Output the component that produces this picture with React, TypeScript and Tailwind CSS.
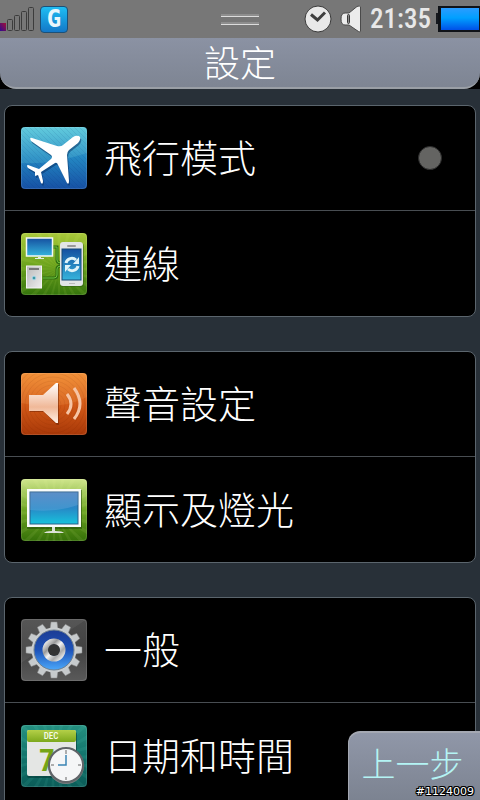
import type { ReactNode } from 'react'

function SignalIcon() {
  return (
    <svg width="36" height="26" viewBox="0 0 36 26" aria-hidden="true">
      <rect x="0" y="17" width="6" height="8" fill="url(#sig)" />
      <g fill="none" stroke="#3c3c3c" strokeWidth="1">
        <rect x="7.5" y="13.5" width="5" height="11" rx="1" />
        <rect x="14.5" y="9.5" width="5" height="15" rx="1" />
        <rect x="21.5" y="5.5" width="5" height="19" rx="1" />
        <rect x="28.5" y="1.5" width="5" height="23" rx="1" />
      </g>
      <defs>
        <linearGradient id="sig" x1="1" y1="0" x2="0" y2="1">
          <stop offset="0" stopColor="#a01038" />
          <stop offset="1" stopColor="#300a90" />
        </linearGradient>
      </defs>
    </svg>
  )
}

function ClockIcon() {
  return (
    <svg width="28" height="28" viewBox="0 0 28 28" aria-hidden="true">
      <circle cx="14" cy="14" r="13" fill="#e9e9e9" stroke="#3a3a3a" />
      <path d="M7 9.5 L13.5 15 L21 7.5" fill="none" stroke="#3f3f3f" strokeWidth="3" />
    </svg>
  )
}

function SpeakerIcon() {
  return (
    <svg width="22" height="28" viewBox="0 0 22 28" aria-hidden="true">
      <path
        d="M5 8 H9 L17 1.5 Q20.5 0 20.5 2 V26 Q20.5 28 17 25.5 L9 20 H5 Q1 20 1 14 Q1 8 5 8 Z"
        fill="#ececec"
        stroke="#4a4a4a"
      />
      <rect x="7.5" y="9.5" width="2" height="9" rx="1" fill="#8a8a8a" stroke="#3a3a3a" />
    </svg>
  )
}

function BatteryIcon() {
  return (
    <svg width="44" height="28" viewBox="0 0 44 28" aria-hidden="true">
      <rect x="0" y="8" width="4" height="11" fill="#15181d" />
      <rect x="2" y="1" width="42" height="26" fill="#101318" />
      <rect x="5" y="3" width="38" height="22" fill="url(#bat)" />
      <defs>
        <linearGradient id="bat" x1="0" y1="0" x2="0" y2="1">
          <stop offset="0" stopColor="#2c9cff" />
          <stop offset="0.45" stopColor="#00a0ff" />
          <stop offset="1" stopColor="#0050e8" />
        </linearGradient>
      </defs>
    </svg>
  )
}

type TileProps = { id: string; from: string; mid: string; to: string; children: ReactNode }

function Tile({ id, from, mid, to, children }: TileProps) {
  return (
    <svg width="66" height="62" viewBox="0 0 66 62" className="shrink-0" aria-hidden="true">
      <defs>
        <linearGradient id={id} x1="0" y1="0" x2="0" y2="1">
          <stop offset="0" stopColor={from} />
          <stop offset="0.5" stopColor={mid} />
          <stop offset="1" stopColor={to} />
        </linearGradient>
        <clipPath id={id + '-clip'}>
          <rect width="66" height="62" rx="4" />
        </clipPath>
      </defs>
      <rect width="66" height="62" rx="4" fill={`url(#${id})`} />
      <g clipPath={`url(#${id}-clip)`}>{children}</g>
      <rect x="0.5" y="0.5" width="65" height="61" rx="4" fill="none" stroke="#fff" strokeOpacity="0.12" />
    </svg>
  )
}

// Sunburst that fans out from a point inside the tile
function Rays({ x, y, color }: { x: number; y: number; color: string }) {
  return (
    <g fill={color} fillOpacity="0.08">
      {Array.from({ length: 24 }, (_, i) => (
        <path key={i} d="M0 0 L80 -4 L80 4 Z" transform={`translate(${x} ${y}) rotate(${i * 15})`} />
      ))}
    </g>
  )
}

// Body and wings of the plane, drawn once as shadow and once in white
const planePath =
  'M58 9 Q55 8 52 10 L42 18 Q40 20 36 19 L11 11 Q8 10 10 14 L30 28 Q32 30 30 32 L18 42 L7 38 Q5 38 7 41 L14 45 L14 49 L17 48 L20 56 Q22 58 22 54 L20 45 L34 36 Q36 35 37 38 L46 56 Q48 58 48 54 L46 28 Q46 25 48 23 L57 16 Q61 11 58 9 Z'

function FlightTile() {
  return (
    <Tile id="flight" from="#5cc8dc" mid="#2386c2" to="#1650a4">
      <g stroke="#0d3f80" strokeOpacity="0.14">
        {Array.from({ length: 26 }, (_, i) => (
          <path key={i} d={`M${i * 5 - 62} 0 L${i * 5} 62`} />
        ))}
      </g>
      <path d="M0 0 H66 V26 Q30 38 0 36 Z" fill="#7fe0e6" fillOpacity="0.18" />
      <path d={planePath} transform="translate(1 2)" fill="#062c60" fillOpacity="0.5" />
      <path d={planePath} fill="#fff" />
    </Tile>
  )
}

function LinkTile() {
  return (
    <Tile id="link" from="#a9c83a" mid="#6fa51e" to="#35740c">
      <Rays x={38} y={36} color="#e6ff80" />
      <g fill="none" stroke="#2f6d12" strokeWidth="3">
        <path d="M32 14 H36 V27 Q36 30 40 30 M22 45 H33 Q36 45 36 42 V36 Q36 33 40 33" />
      </g>
      <g fill="none" stroke="#6fc43c" strokeWidth="1">
        <path d="M32 14 H36 V27 Q36 30 40 30 M22 45 H33 Q36 45 36 42 V36 Q36 33 40 33" />
      </g>
      <defs>
        <linearGradient id="link-screen" x1="0" y1="0" x2="0" y2="1">
          <stop offset="0" stopColor="#1550a0" />
          <stop offset="1" stopColor="#35b4dc" />
        </linearGradient>
        <linearGradient id="link-case" x1="0" y1="0" x2="1" y2="1">
          <stop offset="0" stopColor="#b8b8b8" />
          <stop offset="1" stopColor="#eee" />
        </linearGradient>
      </defs>
      <rect x="5.5" y="5" width="26" height="18" fill="url(#link-screen)" stroke="#f4f8f4" strokeWidth="1.5" />
      <path d="M17 24 H20 V25 H23 V26 H14 V25 H17 Z" fill="#e4ece0" />
      <rect x="5.5" y="33" width="15" height="22" fill="url(#link-case)" stroke="#f3f3f3" />
      <rect x="8" y="35" width="10" height="2" fill="#777" />
      <circle cx="13" cy="45" r="2" fill="#3b98a4" stroke="#bde" />
      <rect x="39" y="10" width="24" height="44" rx="3" fill="#2d5b12" fillOpacity="0.5" />
      <rect x="39" y="9" width="23" height="44" rx="3" fill="#e2e5e5" />
      <rect x="46" y="12" width="9" height="2" rx="1" fill="#999" />
      <rect x="41" y="16" width="19" height="31" fill="url(#link-screen)" stroke="#174a78" />
      <rect x="48" y="50" width="6" height="1" fill="#bbb" />
      <g fill="none" stroke="#dff3f8" strokeWidth="3">
        <path d="M45 30 A6 6 0 0 1 55 27" />
        <path d="M57 33 A6 6 0 0 1 47 36" />
      </g>
      <path d="M58 24 V31 H52 Z M44 39 V32 H50 Z" fill="#dff3f8" />
    </Tile>
  )
}

function SoundTile() {
  return (
    <Tile id="sound" from="#f08a30" mid="#d35a18" to="#a83808">
      <g fill="none" stroke="#7c2a04" strokeOpacity="0.12">
        {[8, 12, 16, 20, 24, 28, 32, 36, 40].map(r => (
          <circle key={r} cx="32" cy="32" r={r} />
        ))}
      </g>
      <path d="M0 0 H66 V24 Q40 38 0 30 Z" fill="#ffc070" fillOpacity="0.14" />
      <defs>
        <linearGradient id="sound-cone" x1="0" y1="0" x2="0" y2="1">
          <stop offset="0" stopColor="#fff" />
          <stop offset="0.6" stopColor="#f0b898" />
          <stop offset="1" stopColor="#fff0e6" />
        </linearGradient>
      </defs>
      <path d="M9 24 H23 L36 11 H38 V52 H36 L23 39 H9 Z" fill="#6b2204" fillOpacity="0.5" />
      <path d="M8 22 H22 L35 10 H37 V50 H35 L22 38 H8 Z" fill="url(#sound-cone)" />
      <g fill="none" stroke="#f6c4a4" strokeWidth="3">
        <path d="M46 21 Q54 31 46 41" />
        <path d="M53 15 Q65 31 53 46" />
      </g>
    </Tile>
  )
}

function DisplayTile() {
  return (
    <Tile id="display" from="#cfe58c" mid="#6ea624" to="#357008">
      <Rays x={33} y={34} color="#efffa0" />
      <defs>
        <linearGradient id="display-screen" x1="0" y1="0" x2="0" y2="1">
          <stop offset="0" stopColor="#4a80be" />
          <stop offset="0.5" stopColor="#2788c6" />
          <stop offset="1" stopColor="#18c2dc" />
        </linearGradient>
      </defs>
      <rect x="6" y="11" width="55" height="39" fill="#1d4505" fillOpacity="0.5" />
      <rect x="6" y="10" width="54" height="38" fill="#fafcfa" />
      <rect x="9" y="13" width="48" height="32" fill="url(#display-screen)" stroke="#2b5e88" />
      <path d="M9 13 H57 V26 Q34 34 9 31 Z" fill="#a8c8f0" fillOpacity="0.2" />
      <path d="M31 48 H34 V52 Q42 52 43 54 H23 Q24 52 31 52 Z" fill="#dde3d8" />
    </Tile>
  )
}

function GeneralTile() {
  return (
    <Tile id="general" from="#4c4c4c" mid="#424242" to="#5a5a5a">
      <path d="M0 0 H66 L0 44 Z" fill="#fff" fillOpacity="0.06" />
      <defs>
        <linearGradient id="gear-face" x1="0" y1="0" x2="0" y2="1">
          <stop offset="0" stopColor="#1c3c94" />
          <stop offset="0.5" stopColor="#1d52b8" />
          <stop offset="1" stopColor="#4ca8fa" />
        </linearGradient>
        <linearGradient id="gear-hub" x1="0" y1="0" x2="1" y2="1">
          <stop offset="0" stopColor="#eee" />
          <stop offset="0.3" stopColor="#999" />
          <stop offset="0.5" stopColor="#f4f4f4" />
          <stop offset="0.75" stopColor="#aaa" />
          <stop offset="1" stopColor="#eee" />
        </linearGradient>
      </defs>
      <g fill="#c6cacc" stroke="#888" strokeWidth="0.5">
        {Array.from({ length: 12 }, (_, i) => (
          <path key={i} d="M-4 -21 L-3 -28 H3 L4 -21 Z" transform={`translate(33 31) rotate(${i * 30})`} />
        ))}
      </g>
      <circle cx="33" cy="31" r="22.5" fill="#c9cdcf" />
      <circle cx="33" cy="31" r="20" fill="url(#gear-face)" stroke="#6f8090" />
      <circle cx="33" cy="31" r="8.5" fill="none" stroke="url(#gear-hub)" strokeWidth="6" />
      <circle cx="33" cy="31" r="6" fill="#343434" />
    </Tile>
  )
}

function DateTile() {
  return (
    <Tile id="date" from="#259080" mid="#12746c" to="#0b5c58">
      <Rays x={32} y={32} color="#70f0dc" />
      <defs>
        <linearGradient id="date-top" x1="0" y1="0" x2="0" y2="1">
          <stop offset="0" stopColor="#b4d048" />
          <stop offset="1" stopColor="#7ca81c" />
        </linearGradient>
      </defs>
      <rect x="6" y="7" width="50" height="46" rx="2" fill="#043c38" fillOpacity="0.6" />
      <rect x="6" y="5" width="49" height="46" rx="2" fill="#e4e6e4" />
      <rect x="6" y="5" width="49" height="12" rx="2" fill="url(#date-top)" />
      <text x="30" y="14" textAnchor="middle" fontSize="9" fill="#f6fae8" className="font-['Roboto_Condensed','Roboto',sans-serif] font-medium">
        DEC
      </text>
      <text x="18" y="46" fontSize="31" fill="#74a416" className="font-['Roboto_Condensed','Roboto',sans-serif] font-bold">
        7
      </text>
      <circle cx="45" cy="41" r="18" fill="#787c7e" />
      <circle cx="45" cy="40" r="17" fill="#f5f6f7" stroke="#606468" strokeWidth="2" />
      <path d="M45 25 V29 M45 52 V55 M30 40 H33 M57 40 H60" stroke="#666" />
      <path d="M45 30 V40 H37" fill="none" stroke="#3a84b4" strokeWidth="1.5" />
    </Tile>
  )
}

function StatusBar() {
  return (
    <header className="flex h-[38px] shrink-0 items-center bg-[#777777]">
      <div className="flex flex-1 items-center gap-1">
        <SignalIcon />
        <span className="flex h-[27px] w-7 items-center justify-center rounded-sm border border-[#1c5078] bg-linear-to-b from-[#20bdf2] to-[#1478c8] font-['DejaVu_Sans_Mono',monospace] text-2xl/6 font-bold text-[#e8f6fc]">
          G
        </span>
      </div>
      <div className="flex w-[38px] flex-col gap-[5px]">
        <div className="h-[3px] border-t-2 border-b border-t-[#8e8e8e] border-b-[#dcdcdc]" />
        <div className="h-[3px] border-t-2 border-b border-t-[#8e8e8e] border-b-[#dcdcdc]" />
      </div>
      <div className="flex flex-1 items-center justify-end">
        <ClockIcon />
        <span className="ml-2">
          <SpeakerIcon />
        </span>
        <time className="mr-[5px] ml-2 font-['Roboto_Condensed','Roboto',sans-serif] text-[27px]/8 font-medium text-[#e8e8e8]">
          21:35
        </time>
        <BatteryIcon />
      </div>
    </header>
  )
}

const rowClass =
  'flex h-[105px] w-full items-center gap-[17px] pl-4 pr-[33px] text-left text-[38px]/[56px] font-light text-white'

function Row({ icon, label }: { icon: ReactNode; label: string }) {
  return (
    <button type="button" className={rowClass}>
      {icon}
      <span className="pb-1">{label}</span>
    </button>
  )
}

function Card({ children }: { children: ReactNode }) {
  return (
    <section className="shrink-0 divide-y divide-[#484d52] rounded-lg border border-[#5b656d] bg-black">{children}</section>
  )
}

export default function App() {
  return (
    <div className="relative flex h-screen flex-col overflow-hidden bg-[#283038] font-['Noto_Sans_CJK_TC',sans-serif]">
      <StatusBar />
      <div className="shrink-0 bg-black">
        <h1 className="flex h-[51px] items-center justify-center rounded-b-2xl border-b-2 border-[#9a9fa6] bg-linear-to-b from-[#8b92a3] to-[#7e8593] pb-1 text-4xl font-light text-white">
          設定
        </h1>
      </div>

      <main className="flex min-h-0 flex-1 flex-col gap-[34px] overflow-hidden px-1 pt-4">
        <Card>
          <label className={rowClass}>
            <FlightTile />
            <span className="flex-1 pb-1">飛行模式</span>
            <input
              type="checkbox"
              className="size-6 appearance-none rounded-full border border-[#2c2c2c] bg-[#646462] checked:bg-[#2c9cff]"
            />
          </label>
          <Row icon={<LinkTile />} label="連線" />
        </Card>
        <Card>
          <Row icon={<SoundTile />} label="聲音設定" />
          <Row icon={<DisplayTile />} label="顯示及燈光" />
        </Card>
        <Card>
          <Row icon={<GeneralTile />} label="一般" />
          <Row icon={<DateTile />} label="日期和時間" />
        </Card>
      </main>

      {/* Back key, floats over the list */}
      <button
        type="button"
        className="absolute right-0 bottom-0 flex h-[69px] w-[132px] flex-col items-center rounded-tl-xl border-t-2 border-l border-[#a4a8b2] bg-linear-to-b from-[#9097a8] to-[#7c8391] pt-[10px] pr-1 text-[34px]/10 font-light text-[#b4f4f4]"
      >
        上一步
      </button>
      <span className="absolute right-[6px] bottom-0 font-['DejaVu_Sans',sans-serif] text-[11px]/4 text-white [text-shadow:1px_0_#000,-1px_0_#000,0_1px_#000,0_-1px_#000,1px_1px_#000,-1px_-1px_#000,1px_-1px_#000,-1px_1px_#000]">
        #1124009
      </span>
    </div>
  )
}
